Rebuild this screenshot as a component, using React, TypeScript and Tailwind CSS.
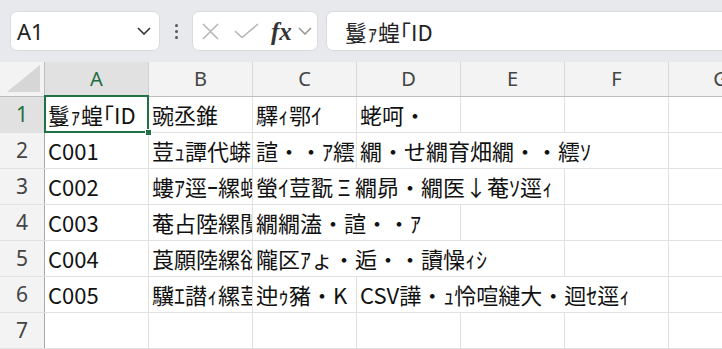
import React from 'react';

type Cell = { col: number; text: string; span?: 1 | 2 | 3 };

const COLS = ['A', 'B', 'C', 'D', 'E', 'F', 'G'];

// 行ごとのセル。span は隣の空セルへはみ出す列数
const ROWS: Cell[][] = [
  [
    { col: 0, text: '鬘ｧ蝗｢ID' },
    { col: 1, text: '豌丞錐' },
    { col: 2, text: '驛ｨ鄂ｲ' },
    { col: 3, text: '蛯呵・' },
  ],
  [
    { col: 0, text: 'C001' },
    { col: 1, text: '荳ｭ譚代蟒ｺ螟ｪ' },
    { col: 2, text: '諠・・ｱ繧ｷ繧ｹ繝・Β驛ｨ' },
    { col: 3, text: '繝・せ繝育畑繝・・繧ｿ', span: 3 },
  ],
  [
    { col: 0, text: 'C002' },
    { col: 1, text: '螻ｱ逕ｰ縲螟ｪ驛・' },
    { col: 2, text: '螢ｲ荳翫Ξ繝昴・繝医↓菴ｿ逕ｨ', span: 3 },
  ],
  [
    { col: 0, text: 'C003' },
    { col: 1, text: '菴占陸縲闃ｱ蟄・' },
    { col: 2, text: '繝繝溘・諠・・ｱ', span: 2 },
  ],
  [
    { col: 0, text: 'C004' },
    { col: 1, text: '莨願陸縲谺｡驛・' },
    { col: 2, text: '隴区ｱょ・逅・・讀懆ｨｼ', span: 3 },
  ],
  [
    { col: 0, text: 'C005' },
    { col: 1, text: '驥ｴ譛ｨ縲荳驛・' },
    { col: 2, text: '迚ｩ豬・K' },
    { col: 3, text: 'CSV譁・ｭ怜喧縺大・迴ｾ逕ｨ', span: 3 },
  ],
  [],
];

const SPAN_W = { 1: 'w-[104px]', 2: 'w-[208px]', 3: 'w-[312px]' };

// Excel gives the Greek letter a full-width box
function CellText({ text }: { text: string }) {
  const parts = text.split(/(Ξ)/);
  return (
    <>
      {parts.map((p, i) =>
        p === 'Ξ' ? (
          <span key={i} className="inline-block w-[22px] text-center">
            {p}
          </span>
        ) : (
          p
        )
      )}
    </>
  );
}

function Chevron({ color = '#333' }: { color?: string }) {
  return (
    <svg width="14" height="8" viewBox="0 0 14 8">
      <path d="M1 1l6 6 6-6" stroke={color} strokeWidth="1.6" fill="none" />
    </svg>
  );
}

function FormulaBar() {
  return (
    <div className="h-[62px] flex items-start pt-[11px] pl-[10px] bg-[#e7e9ec]">
      <div className="w-[150px] h-[40px] shrink-0 bg-white rounded-[7px] border border-[#d9dbde] flex items-center justify-between pl-[6px] pr-[8px]">
        <span className="text-[22px] text-[#222] font-['Noto_Sans',sans-serif]">A1</span>
        <Chevron />
      </div>
      <div className="w-[32px] h-[40px] shrink-0 flex flex-col items-center justify-center gap-[3px]">
        <div className="w-[3px] h-[3px] rounded-full bg-[#555]" />
        <div className="w-[3px] h-[3px] rounded-full bg-[#555]" />
        <div className="w-[3px] h-[3px] rounded-full bg-[#555]" />
      </div>
      <div className="w-[126px] h-[40px] shrink-0 bg-white rounded-[7px] border border-[#d9dbde] flex items-center pl-[9px] pr-[2px]">
        <svg width="17" height="17" viewBox="0 0 17 17">
          <path d="M1 1l15 15M16 1L1 16" stroke="#b4b4b4" strokeWidth="1.5" />
        </svg>
        <svg width="25" height="16" viewBox="0 0 25 16" className="ml-[15px]">
          <path d="M1 8l7 6.5L24 1" stroke="#b4b4b4" strokeWidth="1.5" fill="none" />
        </svg>
        <span className="ml-[12px] text-[25px] leading-none italic font-bold text-[#333] font-['Liberation_Serif',serif]">fx</span>
        <span className="ml-[6px]">
          <Chevron color="#999" />
        </span>
      </div>
      <div className="w-[420px] h-[40px] shrink-0 ml-[8px] bg-white rounded-l-[7px] border border-[#d9dbde] flex items-center pl-[18px]">
        <span className="text-[22px] text-[#222] font-['Noto_Sans_CJK_JP',sans-serif]">鬘ｧ蝗｢ID</span>
      </div>
    </div>
  );
}

function HeaderRow() {
  return (
    <div className="flex h-[35px] border-b border-[#bdbdbd] bg-[#f3f3f3]">
      <div className="w-[45px] shrink-0 border-r border-[#bdbdbd] flex items-end justify-end pr-[4px] pb-[4px]">
        <svg width="33" height="27" viewBox="0 0 33 27">
          <polygon points="33,0 33,27 0,27" fill="#d6d6d6" />
        </svg>
      </div>
      {COLS.map((c, i) => (
        <div
          key={c}
          className={
            i === 0
              ? 'w-[104px] shrink-0 border-r border-[#d0d0d0] bg-[#e1e1e1] flex items-center justify-center text-[20px] text-[#1e6e42] font-["Noto_Sans",sans-serif]'
              : 'w-[104px] shrink-0 border-r border-[#d8d8d8] flex items-center justify-center text-[20px] text-[#444] font-["Noto_Sans",sans-serif]'
          }
        >
          {c}
        </div>
      ))}
    </div>
  );
}

function GridRow({ index, cells }: { index: number; cells: Cell[] }) {
  const out: React.ReactNode[] = [];
  let col = 0;
  while (col < COLS.length) {
    const cell = cells.find((c) => c.col === col);
    const span = cell?.span ?? 1;
    const selected = index === 0 && col === 0;
    out.push(
      <div
        key={col}
        className={`${SPAN_W[span]} shrink-0 h-full border-r border-[#e1e1e1] overflow-hidden whitespace-nowrap pl-[3px] flex items-center text-[22px] text-[#111] font-['Noto_Sans_CJK_JP',sans-serif] ${selected ? 'relative overflow-visible' : ''}`}
      >
        {cell && (
          <span>
            <CellText text={cell.text} />
          </span>
        )}
        {selected && (
          <div className="absolute left-[-1px] top-[-2px] right-[-1px] bottom-[-1px] border-2 border-[#1f7244]">
            <div className="absolute right-[-5px] bottom-[-5px] w-[7px] h-[7px] bg-[#1f7244] border border-white" />
          </div>
        )}
      </div>
    );
    col += span;
  }

  return (
    <div className="flex h-[36px] border-b border-[#e1e1e1]">
      <div
        className={
          index === 0
            ? 'w-[45px] shrink-0 border-r border-[#a8a8a8] bg-[#e1e1e1] flex items-center justify-center text-[21px] text-[#1e6e42] font-["Noto_Sans",sans-serif]'
            : 'w-[45px] shrink-0 border-r border-[#a8a8a8] bg-[#f3f3f3] flex items-center justify-center text-[21px] text-[#444] font-["Noto_Sans",sans-serif]'
        }
      >
        {index + 1}
      </div>
      {out}
    </div>
  );
}

export default function App() {
  return (
    <div className="w-[722px] h-[349px] overflow-hidden bg-white">
      <FormulaBar />
      <div className="bg-white">
        <HeaderRow />
        {ROWS.map((cells, i) => (
          <GridRow key={i} index={i} cells={cells} />
        ))}
      </div>
    </div>
  );
}
